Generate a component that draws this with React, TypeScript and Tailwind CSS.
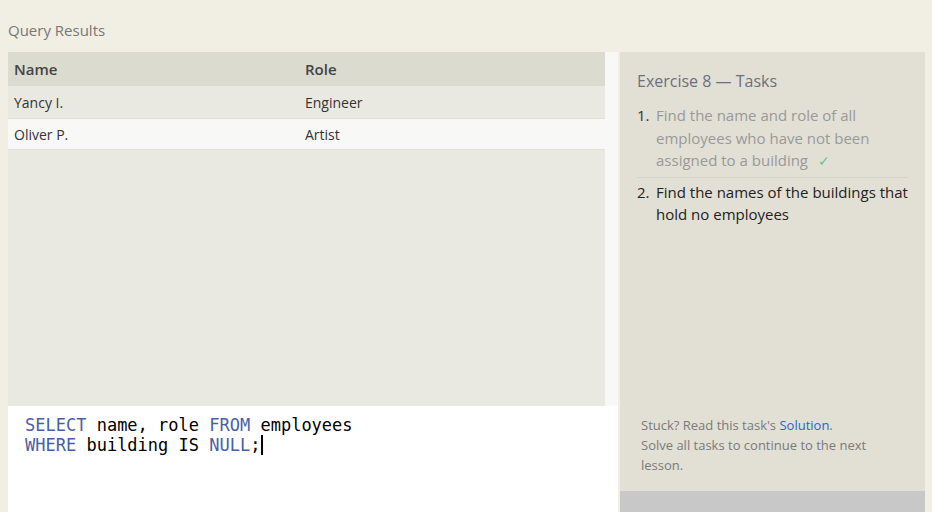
const font = { fontFamily: '"Open Sans", "Noto Sans", sans-serif' };

const rows = [
  { name: "Yancy I.", role: "Engineer" },
  { name: "Oliver P.", role: "Artist" },
];

const QueryResults = () => {
  return (
    <div className="flex h-[354px]">
      <div className="w-[597px] bg-[#eae9e1]">
        <div className="flex h-[34px] items-center bg-[#dcdbd0] text-[15px] font-semibold text-[#444]">
          <div className="w-[297px] pl-[6px]">Name</div>
          <div className="flex-1">Role</div>
        </div>
        {rows.map((r, i) => (
          <div
            key={r.name}
            className={
              i % 2 === 1
                ? "flex h-[32px] items-center border-y border-[#e2e1d8] bg-[#f8f8f6] text-[14px] text-[#333]"
                : "flex h-[32px] items-center text-[14px] text-[#333]"
            }
          >
            <div className="w-[297px] pl-[6px]">{r.name}</div>
            <div className="flex-1">{r.role}</div>
          </div>
        ))}
      </div>
      <div className="w-[13px] bg-[#f8f8f6]" />
    </div>
  );
};

const Editor = () => {
  const kw = "text-[#4a5ea8]";
  return (
    <div
      className="flex-1 bg-white pl-[17px] pt-[9px] text-[17px] leading-[20px] text-black"
      style={{ fontFamily: '"DejaVu Sans Mono", monospace' }}
    >
      <div className="whitespace-pre">
        <span className={kw}>SELECT</span> name, role <span className={kw}>FROM</span> employees
      </div>
      <div className="flex items-center whitespace-pre">
        <span className={kw}>WHERE</span> building IS <span className={kw}>NULL</span>;
        <span className="ml-px inline-block h-[20px] w-[2px] bg-black" />
      </div>
    </div>
  );
};

const Tasks = () => {
  return (
    <div className="flex h-[439px] flex-col bg-[#e2e0d5] px-[17px] pt-[17px] pb-[16px]">
      <h2 className="text-[16px] leading-[24px] text-[#6b6f80]">Exercise 8 — Tasks</h2>
      <ol className="mt-[11px] text-[15px] leading-[22.5px]">
        <li className="flex border-b border-[#d6d4c9] pb-[4px]">
          <span className="w-[19px] shrink-0 text-[#333]">1.</span>
          <span className="text-[#999]">
            Find the name and role of all employees who have not been assigned to a building
            <span className="ml-[10px] text-[14px] text-[#5fc98a]">✓</span>
          </span>
        </li>
        <li className="flex pt-[3px] text-[#222]">
          <span className="w-[19px] shrink-0">2.</span>
          <span>Find the names of the buildings that hold no employees</span>
        </li>
      </ol>
      <div className="mt-auto pl-[4px] text-[13px] leading-[20px] text-[#7a7a7a]">
        <p>
          Stuck? Read this task's <span className="text-[#2a63c7]">Solution</span>.
        </p>
        <p>Solve all tasks to continue to the next lesson.</p>
      </div>
    </div>
  );
};

export default function App() {
  return (
    <div className="flex h-[512px] w-[932px] overflow-hidden bg-[#f1eee3]" style={font}>
      <div className="flex w-[618px] flex-col pl-[8px]">
        <div className="h-[52px] pt-[20px] text-[15px] leading-[20px] text-[#777]">Query Results</div>
        <QueryResults />
        <Editor />
      </div>
      <div className="ml-[2px] flex w-[305px] flex-col pt-[52px]">
        <Tasks />
        <div className="flex-1 bg-[#c8c8c8]" />
      </div>
    </div>
  );
}
